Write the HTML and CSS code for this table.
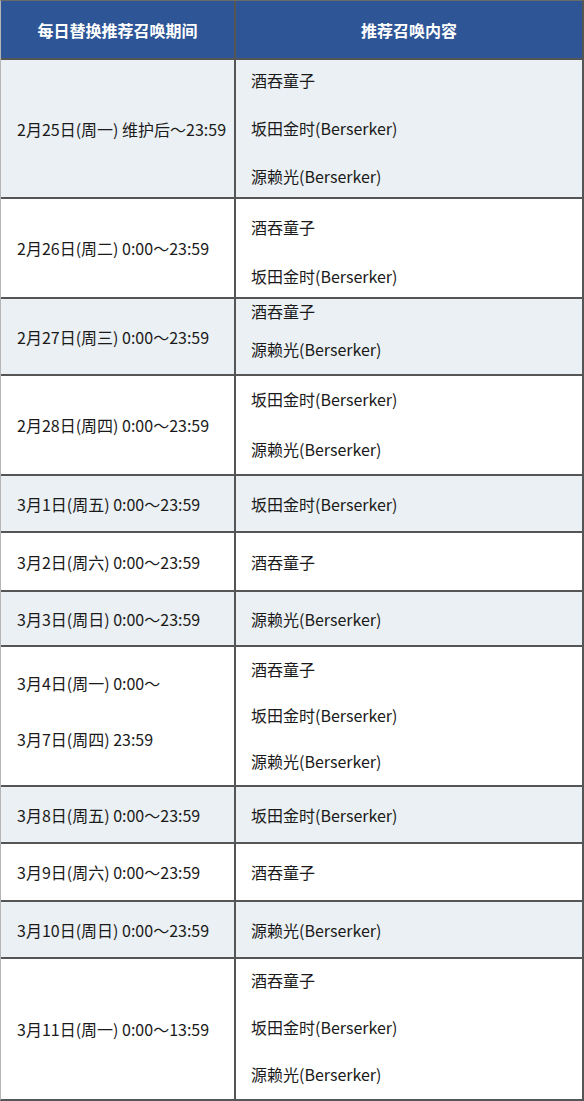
FILE: index.html
```html
<!DOCTYPE html>
<html lang="zh-CN">
<head>
<meta charset="utf-8">
<title>每日替换推荐召唤</title>
<link rel="stylesheet" href="styles.css">
</head>
<body>
<div class="table">
  <div class="row head">
    <div class="hcell hleft">每日替换推荐召唤期间</div>
    <div class="hcell">推荐召唤内容</div>
  </div>

  <div class="row alt r1">
    <div class="cell left"><span>2月25日(周一) 维护后～23:59</span></div>
    <div class="cell right p9-10"><span>酒吞童子</span><span>坂田金时(Berserker)</span><span>源赖光(Berserker)</span></div>
  </div>

  <div class="row r2">
    <div class="cell left"><span>2月26日(周二) 0:00～23:59</span></div>
    <div class="cell right p17-10"><span>酒吞童子</span><span>坂田金时(Berserker)</span></div>
  </div>

  <div class="row alt r3">
    <div class="cell left"><span>2月27日(周三) 0:00～23:59</span></div>
    <div class="cell right p1-14"><span>酒吞童子</span><span>源赖光(Berserker)</span></div>
  </div>

  <div class="row r4">
    <div class="cell left"><span>2月28日(周四) 0:00～23:59</span></div>
    <div class="cell right p12-14"><span>坂田金时(Berserker)</span><span>源赖光(Berserker)</span></div>
  </div>

  <div class="row alt r5">
    <div class="cell left"><span>3月1日(周五) 0:00～23:59</span></div>
    <div class="cell right single"><span>坂田金时(Berserker)</span></div>
  </div>

  <div class="row r6">
    <div class="cell left"><span>3月2日(周六) 0:00～23:59</span></div>
    <div class="cell right single"><span>酒吞童子</span></div>
  </div>

  <div class="row alt r7">
    <div class="cell left"><span>3月3日(周日) 0:00～23:59</span></div>
    <div class="cell right single"><span>源赖光(Berserker)</span></div>
  </div>

  <div class="row r8">
    <div class="cell left two"><span>3月4日(周一) 0:00～</span><span>3月7日(周四) 23:59</span></div>
    <div class="cell right p11-13"><span>酒吞童子</span><span>坂田金时(Berserker)</span><span>源赖光(Berserker)</span></div>
  </div>

  <div class="row alt r9">
    <div class="cell left"><span>3月8日(周五) 0:00～23:59</span></div>
    <div class="cell right single"><span>坂田金时(Berserker)</span></div>
  </div>

  <div class="row r10">
    <div class="cell left"><span>3月9日(周六) 0:00～23:59</span></div>
    <div class="cell right single"><span>酒吞童子</span></div>
  </div>

  <div class="row alt r11">
    <div class="cell left"><span>3月10日(周日) 0:00～23:59</span></div>
    <div class="cell right single"><span>源赖光(Berserker)</span></div>
  </div>

  <div class="row r12">
    <div class="cell left"><span>3月11日(周一) 0:00～13:59</span></div>
    <div class="cell right p10-14"><span>酒吞童子</span><span>坂田金时(Berserker)</span><span>源赖光(Berserker)</span></div>
  </div>
</div>
</body>
</html>
```

FILE: styles.css
```css
* { box-sizing: border-box; }

html, body {
  margin: 0;
  padding: 0;
  background: #ffffff;
}

body {
  font-family: "Noto Sans CJK SC", "Noto Sans", sans-serif;
  font-size: 16px;
  color: #1a1a1a;
}

.table {
  width: 584px;
  border-top: 1px solid #6a6a6a;
  border-left: 1px solid #b5b5b5;
  border-right: 2px solid #555555;
  border-bottom: 2px solid #555555;
}

.row {
  display: grid;
  grid-template-columns: 235px 1fr;
  border-top: 2px solid #555555;
  background: #ffffff;
}

.row.alt { background: #eaf0f3; }

.row.head {
  border-top: 0;
  height: 57px;
  background: #2e5596;
  color: #ffffff;
  font-weight: bold;
}

.hcell {
  display: flex;
  align-items: center;
  justify-content: center;
  line-height: 22px;
  white-space: nowrap;
}

.hcell.hleft {
  border-right: 2px solid #555555;
}

.cell {
  line-height: 22px;
  white-space: nowrap;
}

.cell.left {
  border-right: 2px solid #555555;
  padding-left: 16px;
  display: flex;
  align-items: center;
}

.cell.left.two {
  flex-direction: column;
  align-items: flex-start;
  justify-content: center;
  gap: 34px;
  padding-bottom: 10px;
}

.cell.right {
  padding-left: 15px;
  display: flex;
  flex-direction: column;
  justify-content: space-between;
}

.cell.right.single { justify-content: center; }

.p9-10 { padding-top: 9px; padding-bottom: 10px; }
.p17-10 { padding-top: 17px; padding-bottom: 10px; }
.p1-14 { padding-top: 1px; padding-bottom: 14px; }
.p12-14 { padding-top: 12px; padding-bottom: 14px; }
.p11-13 { padding-top: 11px; padding-bottom: 13px; }
.p10-14 { padding-top: 10px; padding-bottom: 14px; }

.r1 { height: 139px; }
.r2 { height: 100px; }
.r3 { height: 77px; }
.r4 { height: 100px; }
.r5 { height: 57px; }
.r6 { height: 59px; }
.r7 { height: 55px; }
.r8 { height: 140px; }
.r9 { height: 57px; }
.r10 { height: 58px; }
.r11 { height: 57px; }
.r12 { height: 142px; }
```
